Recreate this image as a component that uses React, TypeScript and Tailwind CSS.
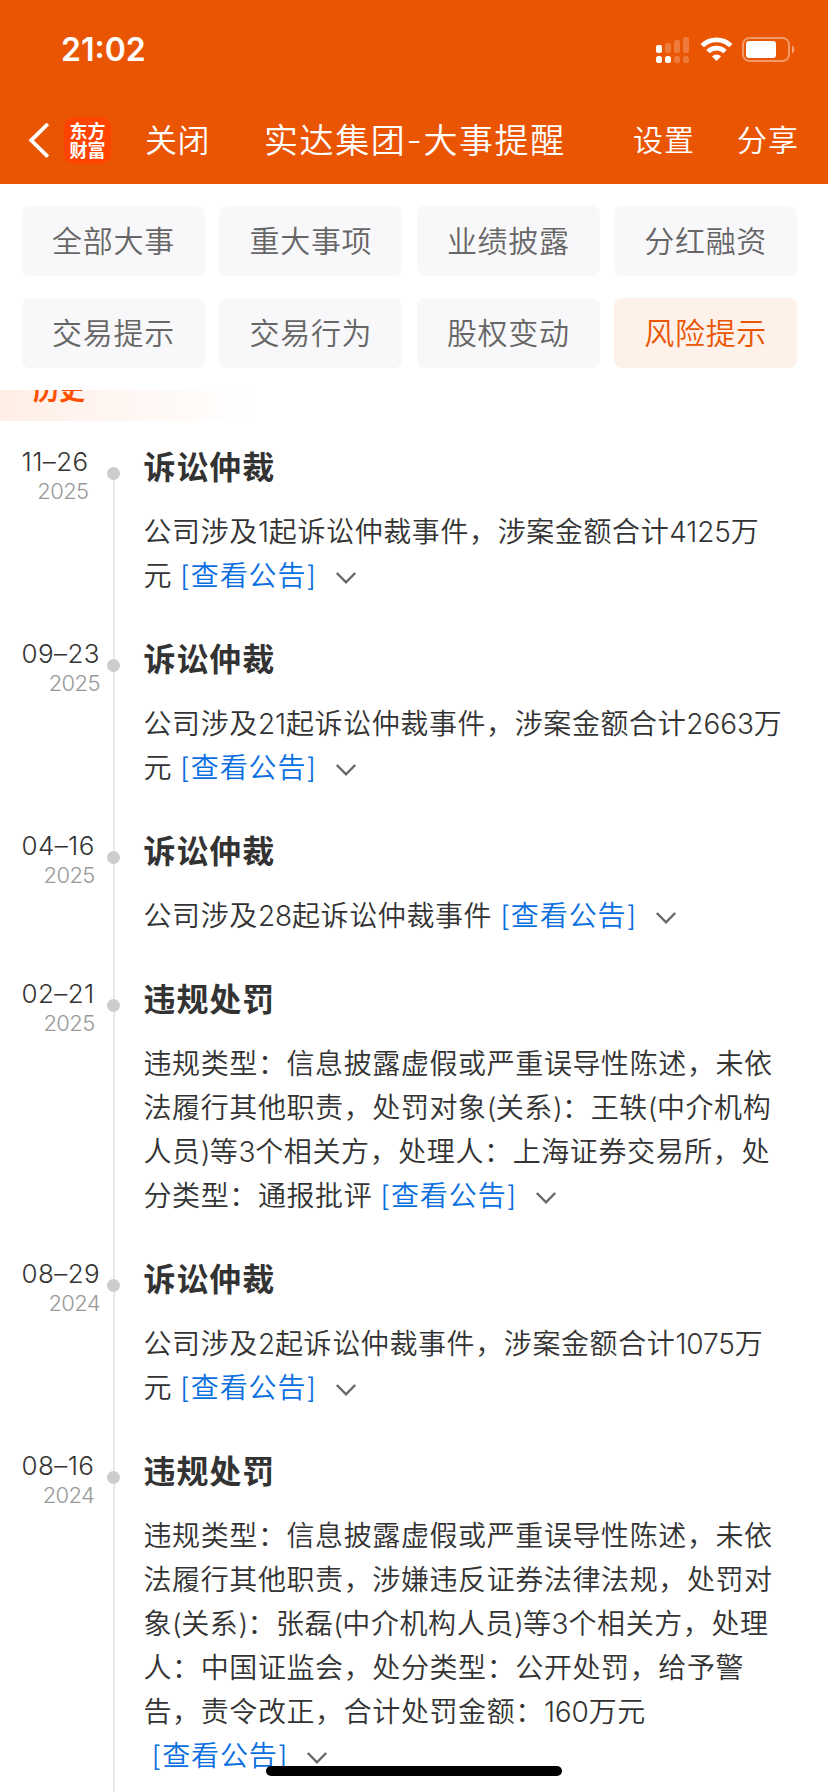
import { Fragment } from "react";

type EventItem = {
  date: string;
  year: string;
  title: string;
  lines: string[];
};

const tabs = [
  "全部大事",
  "重大事项",
  "业绩披露",
  "分红融资",
  "交易提示",
  "交易行为",
  "股权变动",
  "风险提示",
];

const activeTab = "风险提示";

const events: EventItem[] = [
  {
    date: "11–26",
    year: "2025",
    title: "诉讼仲裁",
    lines: ["公司涉及1起诉讼仲裁事件，涉案金额合计4125万", "元"],
  },
  {
    date: "09–23",
    year: "2025",
    title: "诉讼仲裁",
    lines: ["公司涉及21起诉讼仲裁事件，涉案金额合计2663万", "元"],
  },
  {
    date: "04–16",
    year: "2025",
    title: "诉讼仲裁",
    lines: ["公司涉及28起诉讼仲裁事件"],
  },
  {
    date: "02–21",
    year: "2025",
    title: "违规处罚",
    lines: [
      "违规类型：信息披露虚假或严重误导性陈述，未依",
      "法履行其他职责，处罚对象(关系)：王轶(中介机构",
      "人员)等3个相关方，处理人：上海证券交易所，处",
      "分类型：通报批评",
    ],
  },
  {
    date: "08–29",
    year: "2024",
    title: "诉讼仲裁",
    lines: ["公司涉及2起诉讼仲裁事件，涉案金额合计1075万", "元"],
  },
  {
    date: "08–16",
    year: "2024",
    title: "违规处罚",
    lines: [
      "违规类型：信息披露虚假或严重误导性陈述，未依",
      "法履行其他职责，涉嫌违反证券法律法规，处罚对",
      "象(关系)：张磊(中介机构人员)等3个相关方，处理",
      "人：中国证监会，处分类型：公开处罚，给予警",
      "告，责令改正，合计处罚金额：160万元",
      "",
    ],
  },
];

function StatusIcons() {
  return (
    <svg width="140" height="28" viewBox="0 0 140 28" fill="white">
      {/* Dual SIM signal */}
      <rect x="1" y="9" width="6" height="8" rx="2" />
      <g opacity="0.22">
        <rect x="10" y="7" width="6" height="10" rx="2" />
        <rect x="19" y="4" width="6" height="13" rx="2" />
        <rect x="28" y="1" width="6" height="16" rx="2" />
        <rect x="19" y="20" width="6" height="7" rx="2.5" />
        <rect x="28" y="20" width="6" height="7" rx="2.5" />
      </g>
      <rect x="1" y="20" width="6" height="7" rx="2.5" />
      <rect x="10" y="20" width="6" height="7" rx="2.5" />
      {/* Wifi */}
      <g fill="none" stroke="white" strokeWidth="4.8">
        <path d="M47.2 9.6 A20.5 20.5 0 0 1 75.8 9.6" />
        <path d="M53 15.6 A12.2 12.2 0 0 1 70 15.6" />
      </g>
      <path d="M61.5 25 L57 20.4 A6.4 6.4 0 0 1 66 20.4 Z" />
      {/* Battery */}
      <rect x="88" y="2" width="46" height="23" rx="6.5" fill="none" stroke="white" strokeOpacity="0.4" strokeWidth="2" />
      <rect x="91" y="5" width="30" height="17" rx="3" />
      <path d="M137 9.3 a5 5 0 0 1 0 8.4 Z" opacity="0.45" />
    </svg>
  );
}

function Header() {
  return (
    <header className="h-[184px] shrink-0 bg-[#ea5504] text-white">
      <div className="flex h-[97px] items-center justify-between pl-[61px] pr-[19px] pt-[3px]">
        <span className="text-[32px] font-semibold leading-none">21:02</span>
        <div className="w-[154px]">
          <StatusIcons />
        </div>
      </div>
      <nav className="flex h-[87px] items-center whitespace-nowrap pl-[27px]">
        <svg width="24" height="36" viewBox="0 0 24 36" fill="none" stroke="white" strokeWidth="3.8">
          <path d="M20.8 1 L4.2 17.3 L20.8 33.6" />
        </svg>
        <div className="ml-[13px] grid h-[47px] w-[47px] place-content-center rounded-[10px] bg-[#ff4400] text-center text-[18px] font-bold leading-[19px]">
          <div>东方</div>
          <div>财富</div>
        </div>
        <span className="ml-[34px] w-[70px] text-[32px] tracking-[0.6px]">关闭</span>
        <h1 className="ml-[49px] w-[312px] text-[34px] tracking-[1.6px]">实达集团-大事提醒</h1>
        <span className="ml-[57px] w-[64px] text-[30px] tracking-[1px]">设置</span>
        <span className="ml-[40px] text-[30px] tracking-[1px]">分享</span>
      </nav>
    </header>
  );
}

function Tabs() {
  return (
    <div className="relative z-10 grid h-[206px] shrink-0 grid-cols-[183px_183px_183px_183px] content-start gap-x-[14.4px] gap-y-[22px] bg-white pl-[22px] pt-[22px]">
      {tabs.map((tab) => (
        <button
          key={tab}
          className={
            tab === activeTab
              ? "h-[70px] rounded-[8px] bg-[#fdf1ea] text-[30px] font-[350] tracking-[0.7px] text-[#ea5504]"
              : "h-[70px] rounded-[8px] bg-[#f8f8fa] text-[30px] font-[350] tracking-[0.7px] text-[#666]"
          }
        >
          {tab}
        </button>
      ))}
    </div>
  );
}

// Digits and brackets sit tighter than the Chinese characters around them
function MixedText({ text }: { text: string }) {
  return (
    <>
      {text.split(/([0-9]+|[()])/).map((part, i) => {
        if (/^[0-9]+$/.test(part)) {
          return (
            <span key={i} className="tracking-[-0.1px]">
              {part}
            </span>
          );
        }
        if (/^[()]$/.test(part)) {
          return (
            <span key={i} className="tracking-[-0.7px]">
              {part}
            </span>
          );
        }
        return <Fragment key={i}>{part}</Fragment>;
      })}
    </>
  );
}

function NoticeLink() {
  return (
    <>
      <a className="ml-[8px] tracking-[0.9px] text-[#0a70e0]">[查看公告]</a>
      <svg
        className="ml-[18px] inline-block align-[1px]"
        width="22"
        height="14"
        viewBox="0 0 22 14"
        fill="none"
        stroke="#666"
        strokeWidth="2.4"
      >
        <path d="M1.8 2 L11 11.4 L20.2 2" />
      </svg>
    </>
  );
}

function TimelineItem({ item, first }: { item: EventItem; first: boolean }) {
  return (
    <li className="flex">
      <div className="w-[107px] shrink-0 pl-[21.5px] pt-[1px]">
        <div className="inline-block whitespace-nowrap text-right font-[350]">
          <div className="text-[26px] leading-[30px] tracking-[0.4px] text-[#333]">{item.date}</div>
          <div className="text-[22px] leading-[29px] tracking-[-0.6px] text-[#999]">{item.year}</div>
        </div>
      </div>
      <div className="flex w-[13px] shrink-0 flex-col items-center">
        <div className={first ? "h-[21px] w-[2px]" : "h-[21px] w-[2px] bg-[#e9e9e9]"} />
        <div className="h-[13px] w-[13px] shrink-0 rounded-full bg-[#ccc]" />
        <div className="w-[2px] flex-1 bg-[#e9e9e9]" />
      </div>
      <div className="pb-[40px] pl-[23.5px] text-[#333]">
        <h2 className="mb-[20px] text-[32px] font-bold leading-[44px] tracking-[0.9px]">{item.title}</h2>
        <div className="whitespace-nowrap text-[28px] font-[350] leading-[44px] tracking-[0.6px]">
          {item.lines.map((line, i) => (
            <div key={i} className="h-[44px]">
              <MixedText text={line} />
              {i === item.lines.length - 1 && <NoticeLink />}
            </div>
          ))}
        </div>
      </div>
    </li>
  );
}

export default function App() {
  return (
    <div
      lang="zh-CN"
      className="relative flex h-[1792px] w-[828px] flex-col overflow-hidden bg-white font-['Inter','Noto_Sans_CJK_SC',sans-serif] font-[350]"
    >
      <Header />
      <Tabs />
      <main className="min-h-0 flex-1 overflow-hidden">
        {/* Section label, partly scrolled under the tabs */}
        <div className="-mt-[31px] flex h-[62px] w-[252px] items-center bg-gradient-to-r from-[#ffeee6] to-white pl-[33px] text-[26px] font-bold text-[#ff5000]">
          历史
        </div>
        <ul className="pt-[25px]">
          {events.map((item, i) => (
            <TimelineItem key={item.date} item={item} first={i === 0} />
          ))}
        </ul>
      </main>
      <div className="absolute bottom-[16px] left-[266px] h-[10px] w-[296px] rounded-full bg-black" />
    </div>
  );
}
